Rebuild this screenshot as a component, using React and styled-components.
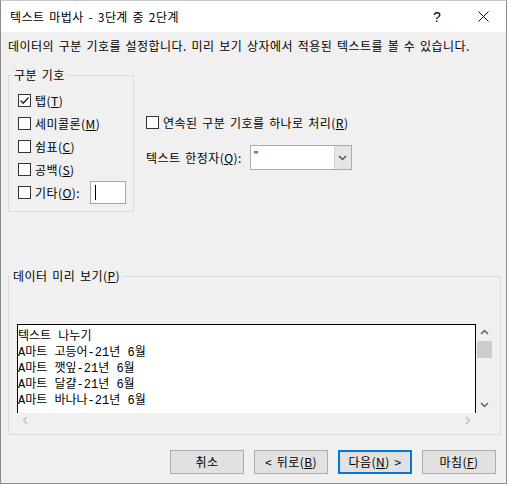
import React from "react";
import styled, { createGlobalStyle } from "styled-components";

const Global = createGlobalStyle`
  html, body { margin: 0; padding: 0; background: #ffffff; }
  body {
    font-family: "Noto Sans CJK KR", "Noto Sans", sans-serif;
    font-size: 12px;
    color: #000;
    letter-spacing: 0.45px;
    word-spacing: 1.6px;
  }
  * { box-sizing: border-box; }
`;

const Dialog = styled.div`
  width: 507px;
  border: 1px solid #8c8c8c;
  border-top-color: #c8c8c8;
  background: #f0f0f0;
  display: flex;
  flex-direction: column;
`;

const TitleBar = styled.div`
  height: 31px;
  background: #ffffff;
  display: flex;
  align-items: center;
  padding-left: 9px;
`;

const Title = styled.div`
  flex: 1;
  font-size: 12px;
  line-height: 16px;
`;

const TitleButton = styled.div`
  width: 46px;
  height: 31px;
  display: flex;
  align-items: center;
  justify-content: center;
  font-family: "Liberation Sans", sans-serif;
  font-size: 14px;
`;

const Content = styled.div`
  padding: 0 5px 9px 7px;
  display: flex;
  flex-direction: column;
`;

const Description = styled.div`
  margin-top: 7px;
  line-height: 14px;
  white-space: nowrap;
`;

const OptionsRow = styled.div`
  display: flex;
  margin-top: 15px;
`;

const Group = styled.fieldset`
  margin: 0;
  border: 1px solid #dcdcdc;
  padding: ${(p) => p.$pad};
  width: ${(p) => p.$width || "auto"};
  min-width: 0;
`;

const Legend = styled.legend`
  padding: 0 2px;
  margin-left: -6px;
  line-height: 14px;
  font-size: 12px;
`;

const CheckRow = styled.label`
  display: flex;
  align-items: center;
  height: 23px;
  gap: 4px;
  white-space: nowrap;
`;

const Box = styled.span`
  width: 13px;
  height: 13px;
  border: 1px solid #333333;
  background: #ffffff;
  display: inline-flex;
  align-items: center;
  justify-content: center;
  flex: none;
`;

const SmallInput = styled.div`
  width: 36px;
  height: 23px;
  margin-left: 6px;
  border: 1px solid #a5a5a5;
  background: #fff;
  display: flex;
  align-items: center;
  padding-left: 4px;
`;

const Caret = styled.span`
  width: 1px;
  height: 15px;
  background: #000;
`;

const RightCol = styled.div`
  margin-left: 12px;
  padding-top: 43px;
  display: flex;
  flex-direction: column;
`;

const QualifierRow = styled.div`
  display: flex;
  align-items: center;
  margin-top: 11px;
  gap: 8px;
`;

const Combo = styled.div`
  width: 102px;
  height: 25px;
  border: 1px solid #acacac;
  background: #fff;
  display: flex;
`;

const ComboText = styled.div`
  flex: 1;
  padding-left: 3px;
  line-height: 20px;
  font-family: "Liberation Sans", sans-serif;
`;

const ComboButton = styled.div`
  width: 17px;
  background: #e5e5e5;
  border-left: 1px solid #d4d4d4;
  display: flex;
  align-items: center;
  justify-content: center;
`;

const PreviewGroup = styled(Group)`
  margin-top: 57px;
`;

const PreviewControl = styled.div`
  display: grid;
  grid-template-columns: 1fr 17px;
  grid-template-rows: 89px 15px;
`;

const PreviewText = styled.div`
  background: #fff;
  border: 1px solid #000;
  border-bottom: none;
  padding-top: 4px;
  font-family: "Liberation Mono", "Noto Sans CJK KR", monospace;
  font-size: 12px;
  font-weight: 400;
  letter-spacing: 0;
  word-spacing: 0;
  overflow: hidden;
`;

const PreviewLine = styled.div`
  height: 16px;
  line-height: 16px;
  white-space: pre;
`;

const VScroll = styled.div`
  display: flex;
  flex-direction: column;
  align-items: stretch;
`;

const ScrollArrow = styled.div`
  height: ${(p) => p.$h || "17px"};
  width: ${(p) => p.$w || "auto"};
  display: flex;
  align-items: center;
  justify-content: center;
`;

const Thumb = styled.div`
  height: 17px;
  margin: 0 1px;
  background: #cdcdcd;
`;

const Track = styled.div`
  flex: 1;
`;

const HScroll = styled.div`
  display: flex;
  justify-content: space-between;
  align-items: center;
`;

const Buttons = styled.div`
  display: flex;
  justify-content: flex-end;
  gap: 10px;
  margin-top: 15px;
  padding-right: 5px;
`;

const Button = styled.div`
  width: 74px;
  height: 24px;
  background: #e1e1e1;
  border: ${(p) => (p.$default ? "2px solid #0078d7" : "1px solid #adadad")};
  display: flex;
  align-items: center;
  justify-content: center;
  font-size: 12px;
  line-height: 14px;
  white-space: nowrap;
`;

const Check = ({ checked }) => (
  <Box>
    {checked && (
      <svg width="11" height="11" viewBox="0 0 11 11">
        <polyline points="1.5,5.5 4.2,8.3 9.5,2.5" fill="none" stroke="#222" strokeWidth="1.3" />
      </svg>
    )}
  </Box>
);

const Chevron = ({ dir, color }) => {
  const pts = {
    up: "1,6 4.5,2.5 8,6",
    down: "1,3 4.5,6.5 8,3",
    left: "6,1 2.5,4.5 6,8",
    right: "3,1 6.5,4.5 3,8",
  }[dir];
  return (
    <svg width="9" height="9" viewBox="0 0 9 9">
      <polyline points={pts} fill="none" stroke={color} strokeWidth="1.5" />
    </svg>
  );
};

const delimiters = [
  { label: "탭", key: "T", checked: true },
  { label: "세미콜론", key: "M" },
  { label: "쉼표", key: "C" },
  { label: "공백", key: "S" },
];

const previewLines = [
  "텍스트 나누기",
  "A마트 고등어-21년 6월",
  "A마트 깻잎-21년 6월",
  "A마트 달걀-21년 6월",
  "A마트 바나나-21년 6월",
];

export default function App() {
  return (
    <>
      <Global />
      <Dialog>
        <TitleBar>
          <Title>텍스트 마법사 - 3단계 중 2단계</Title>
          <TitleButton>?</TitleButton>
          <TitleButton>
            <svg width="11" height="11" viewBox="0 0 11 11">
              <path d="M0.5 0.5 L10.5 10.5 M10.5 0.5 L0.5 10.5" stroke="#000" strokeWidth="1" />
            </svg>
          </TitleButton>
        </TitleBar>
        <Content>
          <Description>
            데이터의 구분 기호를 설정합니다. 미리 보기 상자에서 적용된 텍스트를 볼 수 있습니다.
          </Description>
          <OptionsRow>
            <Group $width="126px" $pad="7px 6px 7px 9px">
              <Legend>구분 기호</Legend>
              {delimiters.map((d) => (
                <CheckRow key={d.key}>
                  <Check checked={d.checked} />
                  <span>
                    {d.label}(<u>{d.key}</u>)
                  </span>
                </CheckRow>
              ))}
              <CheckRow>
                <Check />
                <span>
                  기타(<u>O</u>):
                </span>
                <SmallInput>
                  <Caret />
                </SmallInput>
              </CheckRow>
            </Group>
            <RightCol>
              <CheckRow>
                <Check />
                <span>
                  연속된 구분 기호를 하나로 처리(<u>R</u>)
                </span>
              </CheckRow>
              <QualifierRow>
                <span>
                  텍스트 한정자(<u>Q</u>):
                </span>
                <Combo>
                  <ComboText>"</ComboText>
                  <ComboButton>
                    <Chevron dir="down" color="#555" />
                  </ComboButton>
                </Combo>
              </QualifierRow>
            </RightCol>
          </OptionsRow>
          <PreviewGroup $pad="41px 7px 6px 8px">
            <Legend>
              데이터 미리 보기(<u>P</u>)
            </Legend>
            <PreviewControl>
              <PreviewText>
                {previewLines.map((l) => (
                  <PreviewLine key={l}>{l}</PreviewLine>
                ))}
              </PreviewText>
              <VScroll>
                <ScrollArrow>
                  <Chevron dir="up" color="#606060" />
                </ScrollArrow>
                <Thumb />
                <Track />
                <ScrollArrow>
                  <Chevron dir="down" color="#606060" />
                </ScrollArrow>
              </VScroll>
              <HScroll>
                <ScrollArrow $w="17px" $h="15px">
                  <Chevron dir="left" color="#c2c2c2" />
                </ScrollArrow>
                <ScrollArrow $w="17px" $h="15px">
                  <Chevron dir="right" color="#c2c2c2" />
                </ScrollArrow>
              </HScroll>
              <div />
            </PreviewControl>
          </PreviewGroup>
          <Buttons>
            <Button>취소</Button>
            <Button>
              &lt; 뒤로(<u>B</u>)
            </Button>
            <Button $default>
              다음(<u>N</u>) &gt;
            </Button>
            <Button>
              마침(<u>F</u>)
            </Button>
          </Buttons>
        </Content>
      </Dialog>
    </>
  );
}
